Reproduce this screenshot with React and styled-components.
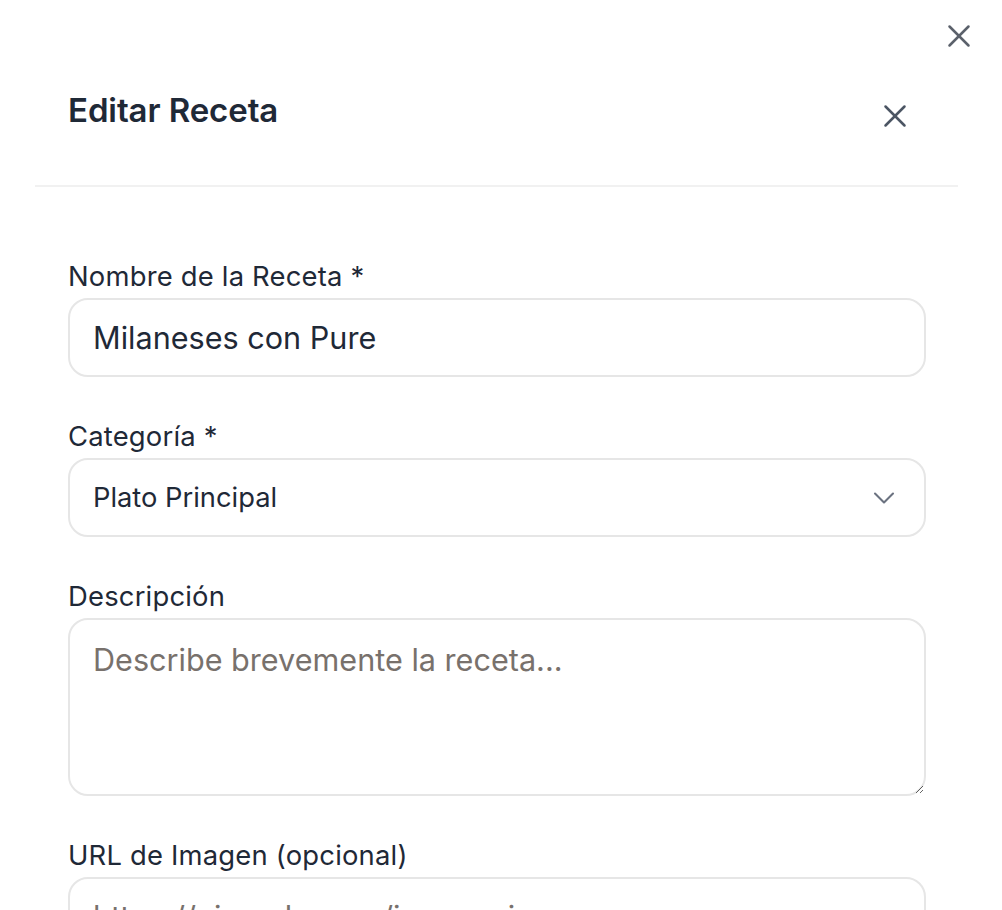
import React from "react";
import styled, { createGlobalStyle } from "styled-components";

const GlobalStyle = createGlobalStyle`
  html, body {
    margin: 0;
    padding: 0;
    background: #ffffff;
    overflow: hidden;
  }
  body {
    font-family: Inter, "Noto Sans", "Liberation Sans", sans-serif;
    color: #1f2937;
  }
  * {
    box-sizing: border-box;
  }
`;

const XIcon = ({ size = 38, color = "#4b5563" }) => (
  <svg width={size} height={size} viewBox="0 0 24 24" fill="none" stroke={color} strokeWidth="1.6" strokeLinecap="round">
    <path d="M18 6 6 18" />
    <path d="m6 6 12 12" />
  </svg>
);

const ChevronDown = () => (
  <svg width="36" height="36" viewBox="0 0 24 24" fill="none" stroke="#6b7280" strokeWidth="1.4" strokeLinecap="round" strokeLinejoin="round">
    <path d="m6 9 6 6 6-6" />
  </svg>
);

const App = () => {
  return (
    <Page>
      <GlobalStyle />
      <OuterClose aria-label="Cerrar">
        <XIcon color="#5b616b" />
      </OuterClose>

      <Modal>
        <Header>
          <Title>Editar Receta</Title>
          <CloseBtn aria-label="Cerrar">
            <XIcon />
          </CloseBtn>
        </Header>

        <Body>
          <Field>
            <Label>Nombre de la Receta *</Label>
            <Input defaultValue="Milaneses con Pure" />
          </Field>

          <Field>
            <Label>Categoría *</Label>
            <SelectWrap>
              <Select defaultValue="principal">
                <option value="entrada">Entrada</option>
                <option value="principal">Plato Principal</option>
                <option value="postre">Postre</option>
              </Select>
              <Chevron>
                <ChevronDown />
              </Chevron>
            </SelectWrap>
          </Field>

          <Field>
            <Label>Descripción</Label>
            <TextArea placeholder="Describe brevemente la receta..." />
          </Field>

          <Field>
            <Label>URL de Imagen (opcional)</Label>
            <Input placeholder="https://ejemplo.com/imagen.jpg" />
          </Field>
        </Body>
      </Modal>
    </Page>
  );
};

const Page = styled.div`
  position: relative;
  width: 1002px;
  height: 910px;
  overflow: hidden;
`;

const OuterClose = styled.button`
  position: absolute;
  top: 17px;
  right: 24px;
  width: 38px;
  height: 38px;
  padding: 0;
  border: 0;
  background: transparent;
  display: flex;
  align-items: center;
  justify-content: center;
  cursor: pointer;
`;

const Modal = styled.div`
  margin: 0 44px 0 35px;
`;

const Header = styled.div`
  display: flex;
  justify-content: space-between;
  align-items: flex-start;
  padding: 90px 44px 50px 33px;
  border-bottom: 2px solid #f1f1f1;
`;

const Title = styled.h2`
  margin: 0;
  font-size: 33px;
  line-height: 40px;
  font-weight: 600;
  letter-spacing: -0.1px;
  color: #1f2937;
`;

const CloseBtn = styled.button`
  width: 38px;
  height: 38px;
  margin-top: 7px;
  padding: 0;
  border: 0;
  background: transparent;
  display: flex;
  align-items: center;
  justify-content: center;
  cursor: pointer;
`;

const Body = styled.div`
  display: flex;
  flex-direction: column;
  gap: 41px;
  padding: 71px 32px 0 33px;
`;

const Field = styled.div`
  display: flex;
  flex-direction: column;
`;

const Label = styled.label`
  font-size: 27.4px;
  line-height: 36px;
  font-weight: 400;
  letter-spacing: 0.2px;
  color: #1f2937;
  margin-bottom: 4px;
`;

const Input = styled.input`
  width: 100%;
  height: 79px;
  padding: 0 23px;
  border: 2px solid #e6e6e6;
  border-radius: 20px;
  font-family: inherit;
  font-size: 30.6px;
  color: #1f2937;
  background: #ffffff;
  outline: none;

  &::placeholder {
    color: #78716c;
  }
`;

const SelectWrap = styled.div`
  position: relative;
`;

const Select = styled.select`
  width: 100%;
  height: 79px;
  padding: 0 23px;
  border: 2px solid #e6e6e6;
  border-radius: 20px;
  font-family: inherit;
  font-size: 27.3px;
  color: #1f2937;
  background: #ffffff;
  appearance: none;
  outline: none;
`;

const Chevron = styled.span`
  position: absolute;
  right: 24px;
  top: 50%;
  transform: translateY(-50%);
  display: flex;
  pointer-events: none;
`;

const TextArea = styled.textarea`
  width: 100%;
  height: 178px;
  padding: 22px 23px;
  border: 2px solid #e6e6e6;
  border-radius: 20px;
  font-family: inherit;
  font-size: 30.6px;
  line-height: 36px;
  color: #1f2937;
  background: #ffffff;
  resize: vertical;
  outline: none;

  &::placeholder {
    color: #78716c;
  }
`;

export default App;
